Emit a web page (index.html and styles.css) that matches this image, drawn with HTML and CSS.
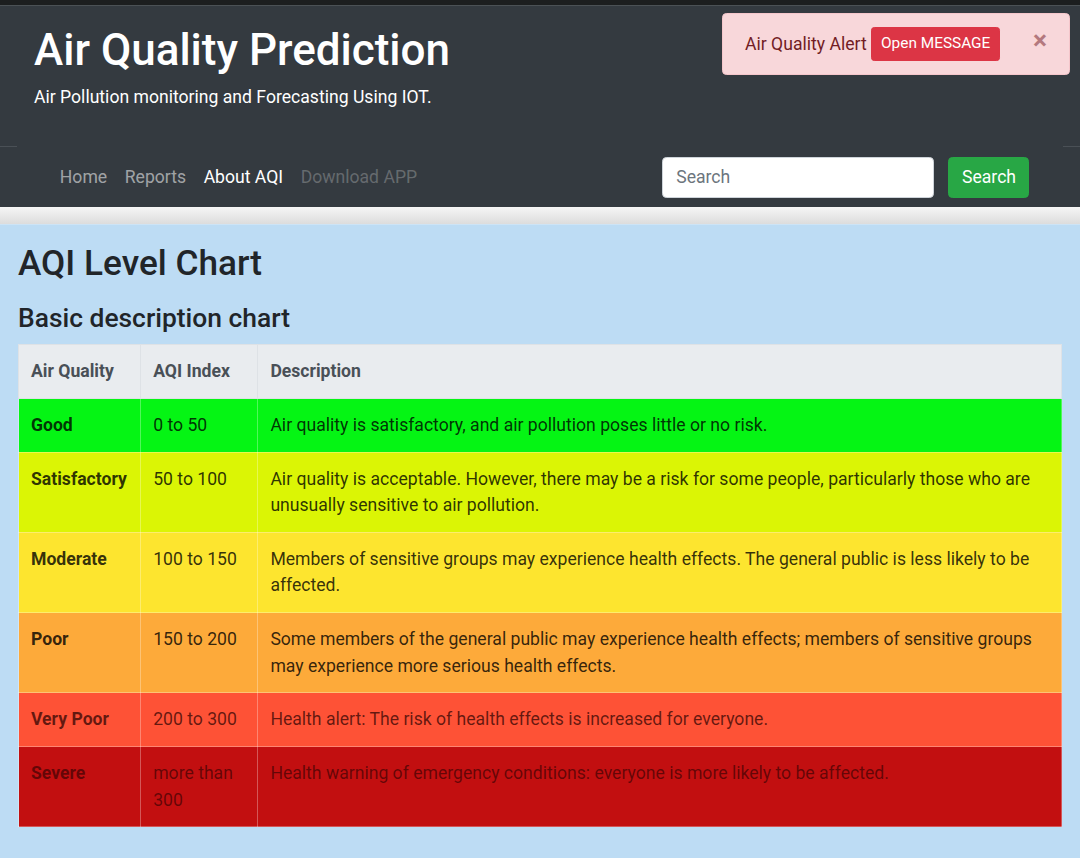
FILE: index.html
```html
<!DOCTYPE html>
<html lang="en">
<head>
<meta charset="utf-8">
<title>Air Quality Prediction</title>
<link rel="stylesheet" href="styles.css">
</head>
<body>
<div class="topbar"></div>
<header class="jumbotron">
  <h1 class="site-title">Air Quality Prediction</h1>
  <p class="lead">Air Pollution monitoring and Forecasting Using IOT.</p>
</header>
<div class="nav-outer">
  <nav class="navbar">
    <ul class="nav-links">
      <li><a class="nav-link" href="#">Home</a></li>
      <li><a class="nav-link" href="#">Reports</a></li>
      <li><a class="nav-link active" href="#">About AQI</a></li>
      <li><a class="nav-link disabled" href="#">Download APP</a></li>
    </ul>
    <form class="search-form">
      <input class="search-input" type="search" placeholder="Search">
      <button class="btn-search" type="button">Search</button>
    </form>
  </nav>
</div>
<div class="shade"></div>
<main class="content">
  <h2 class="chart-title">AQI Level Chart</h2>
  <h4 class="chart-sub">Basic description chart</h4>
  <table class="aqi-table">
    <thead>
      <tr><th class="c1">Air Quality</th><th class="c2">AQI Index</th><th>Description</th></tr>
    </thead>
    <tbody>
      <tr class="good"><th>Good</th><td>0 to 50</td><td>Air quality is satisfactory, and air pollution poses little or no risk.</td></tr>
      <tr class="satisfactory"><th>Satisfactory</th><td>50 to 100</td><td>Air quality is acceptable. However, there may be a risk for some people, particularly those who are unusually sensitive to air pollution.</td></tr>
      <tr class="moderate"><th>Moderate</th><td>100 to 150</td><td>Members of sensitive groups may experience health effects. The general public is less likely to be affected.</td></tr>
      <tr class="poor"><th>Poor</th><td>150 to 200</td><td>Some members of the general public may experience health effects; members of sensitive groups may experience more serious health effects.</td></tr>
      <tr class="verypoor"><th>Very Poor</th><td>200 to 300</td><td>Health alert: The risk of health effects is increased for everyone.</td></tr>
      <tr class="severe"><th>Severe</th><td>more than 300</td><td>Health warning of emergency conditions: everyone is more likely to be affected.</td></tr>
    </tbody>
  </table>
</main>
<div class="alert">
  <span class="alert-text">Air Quality Alert</span>
  <button class="btn-alert" type="button">Open MESSAGE</button>
  <button class="alert-close" type="button" aria-label="Close">&times;</button>
</div>
</body>
</html>
```
FILE: styles.css
```css
html, body {
  margin: 0;
  padding: 0;
}
body {
  font-family: Roboto, "Liberation Sans", sans-serif;
  font-size: 17.6px;
  line-height: 1.5;
  color: #212529;
  background: #bddcf4;
  min-height: 858px;
}
.topbar {
  height: 5px;
  background: #1c1e1f;
  border-bottom: 1px solid #4b5155;
}
.jumbotron {
  background: #343a40;
  color: #fff;
  padding: 18px 34px 36px;
}
.site-title {
  margin: 0 0 7px;
  font-size: 44px;
  font-weight: 500;
  line-height: 1.2;
}
.lead {
  margin: 0;
  font-size: 17.6px;
  line-height: 26.4px;
}
.nav-outer {
  background: #343a40;
  border-top: 1px solid #4a5056;
}
.navbar {
  background: #343a40;
  margin: -1px 17px 0 17px;
  padding: 9px 34px 9px 34px;
  display: flex;
  align-items: center;
  justify-content: space-between;
  height: 61px;
  box-sizing: border-box;
  border-top: 1px solid #343a40;
}
.nav-links {
  list-style: none;
  margin: 0;
  padding: 0;
  display: flex;
}
.nav-link {
  display: block;
  padding: 8.8px;
  color: rgba(255,255,255,.55);
  text-decoration: none;
  font-size: 17.6px;
  line-height: 26.4px;
}
.nav-link.active { color: #fff; }
.nav-link.disabled { color: rgba(255,255,255,.25); }
.search-form {
  display: flex;
  align-items: center;
}
.search-input {
  width: 272px;
  height: 41px;
  box-sizing: border-box;
  padding: 6px 13.2px;
  font-family: Roboto, "Liberation Sans", sans-serif;
  font-size: 17.6px;
  color: #495057;
  background: #fff;
  border: 1px solid #ced4da;
  border-radius: 4.4px;
  margin-right: 14px;
  outline: none;
}
.search-input::placeholder { color: #6c757d; }
.btn-search {
  height: 41px;
  width: 81px;
  box-sizing: border-box;
  font-family: Roboto, "Liberation Sans", sans-serif;
  font-size: 17.6px;
  color: #fff;
  background: #28a745;
  border: 1px solid #28a745;
  border-radius: 4.4px;
  padding: 0 13px;
}
.shade {
  height: 17px;
  background: linear-gradient(#f6f6f6, #dcdcdc);
  border-bottom: 1px solid #cde4f6;
}
.content {
  padding: 16.6px 18px 32px;
}
.chart-title {
  margin: 0 0 19.4px;
  font-size: 35.2px;
  font-weight: 500;
  line-height: 1.2;
}
.chart-sub {
  margin: 0 0 9px;
  font-size: 26.4px;
  font-weight: 500;
  line-height: 1.2;
}
.aqi-table {
  width: 100%;
  border-collapse: collapse;
  table-layout: fixed;
}
.aqi-table th, .aqi-table td {
  padding: 13.2px 13.2px 13.2px 12px;
  vertical-align: top;
  text-align: left;
  line-height: 26.4px;
  border: 1px solid rgba(255,255,255,.3);
}
.aqi-table thead th {
  background: #e9ecef;
  color: #495057;
  font-weight: 700;
  border-color: #dee2e6;
}
.aqi-table .c1 { width: 96px; }
.aqi-table .c2 { width: 91px; }
.aqi-table tbody th { font-weight: 700; }
.aqi-table tbody tr { color: rgba(0,0,0,.8); }
.good { background: #05f514; }
.satisfactory { background: #dbf505; }
.moderate { background: #fde52f; }
.poor { background: #fdaa3a; }
.verypoor { background: #fe5236; }
.severe { background: #c20f10; }
.aqi-table tbody tr.verypoor { color: rgba(30,0,0,.7); }
.aqi-table tbody tr.severe { color: rgba(30,0,0,.58); }
.alert {
  position: absolute;
  top: 13px;
  right: 10px;
  width: 348px;
  height: 62px;
  box-sizing: border-box;
  background: #f8d7da;
  border: 1px solid #f5c6cb;
  border-radius: 4.4px;
  color: #721c24;
  padding: 13.2px 22px;
  display: flex;
  align-items: center;
}
.alert-text {
  font-size: 17.6px;
  margin-right: 4.5px;
}
.btn-alert {
  font-family: Roboto, "Liberation Sans", sans-serif;
  font-size: 15.4px;
  line-height: 1.5;
  padding: 4.4px 8.8px;
  color: #fff;
  background: #dc3545;
  border: 1px solid #dc3545;
  border-radius: 3.3px;
}
.alert-close {
  position: absolute;
  top: 0;
  right: 0;
  padding: 13px 22px;
  background: transparent;
  border: 0;
  font-family: Roboto, "Liberation Sans", sans-serif;
  font-size: 26.4px;
  font-weight: 700;
  line-height: 1;
  opacity: .5;
  color: #721c24;
}
```
